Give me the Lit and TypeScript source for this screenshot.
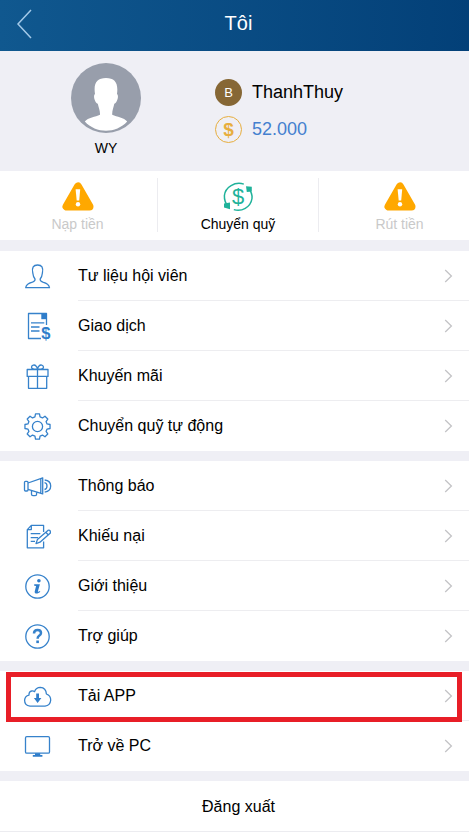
import { LitElement, html, svg, css, TemplateResult } from "lit";
import { customElement, property } from "lit/decorators.js";

const gearPath = (() => {
  const cx = 15.5, cy = 15.5, teeth = 8;
  const pts: string[] = [];
  const at = (r: number, deg: number) => {
    const a = (deg * Math.PI) / 180;
    return `${(cx + r * Math.cos(a)).toFixed(2)} ${(cy + r * Math.sin(a)).toFixed(2)}`;
  };
  for (let i = 0; i < teeth; i++) {
    const c = (i * 360) / teeth - 90;
    pts.push(at(9.9, c - 15), at(12.7, c - 9), at(12.7, c + 9), at(9.9, c + 15));
  }
  return `M${pts.join("L")}Z`;
})();

const icons: Record<string, TemplateResult> = {
  user: svg`<path d="M3.7 26.7C4 23.2 7 22 10.4 21.1C12.8 20.3 13.3 19.3 13 18C11.2 16 11 14 10.8 12C9.6 6.4 11.4 4 15.6 4C19.8 4 21.5 6.4 20.4 12C20.2 14 19.9 16 18.2 18C17.9 19.3 18.5 20.3 20.8 21.1C24.3 22 27.2 23.2 27.5 26.7Z"/>`,
  bill: svg`<path d="M24.5 14V2.5H6.5V27.5H19"/><path class="solid" d="M19.3 2.5H25V8.2H19.3Z"/><path d="M9 11.8H22.3M9 16H17.5M9 20H17.5"/><text class="glyph" x="23.8" y="27.6" font-size="16.5">$</text>`,
  gift: svg`<path d="M5.2 8.5H26V15.4H5.2ZM6.5 15.4V27.3H24.7V15.4M15.5 8.5V27.3M15.5 8.2C12 8.4 9.3 8 9.5 6C9.8 4 12.5 3.2 14 5C15 6 15.4 7 15.5 8.2C15.7 7 16.1 6 17 5C18.5 3.2 21.3 4 21.5 6C21.7 8 19 8.4 15.5 8.2"/>`,
  gear: svg`<path d=${gearPath}/><circle cx="15.5" cy="15.5" r="5.1"/>`,
  horn: svg`<rect x="2.5" y="10.3" width="3.5" height="9.7" rx="1"/><path d="M6 12L20.7 6.8V22.9L6 18.3M9.5 19.6V23.2Q9.5 24.6 11 24.6H13.2Q14.6 24.6 14.6 23.2V21M18.8 7.5V22.3M22.5 11.6Q25 12 25 15Q25 18 22.5 18.5M22.7 9Q28.7 9.7 28.7 15Q28.7 20.2 22.7 21.1"/>`,
  note: svg`<path d="M21.6 11V4.4H9.3L5.3 8.6V26.8H21.6V20.5M9.3 4.4V8.6H5.3M8.7 12.7H18.3M8.7 16.7H16M8.7 20.4H13"/><path d="M14 22.6L15.4 18.6L25.9 9.4Q28.6 8.5 28.4 11.9L18 21.2ZM23.8 11.3L26.4 14"/>`,
  info: svg`<circle cx="15.5" cy="15.5" r="11.7"/><circle class="solid" cx="16.9" cy="9.8" r="1.8"/><path class="solid" d="M12.2 13.2H17.9L15.9 20.2C15.8 21.2 17 20.6 17.8 19.9L18.3 20.7C16.4 22.7 12.3 23.8 12.7 20.5L14.1 15.1L12.2 14.7Z"/>`,
  help: svg`<circle cx="15.5" cy="15.5" r="11.7"/><path d="M12 12.4Q12 8.9 15.6 8.9Q19 8.9 19 11.9Q19 13.5 17.1 14.7Q15.6 15.7 15.6 17.7" style="stroke-width:2.5"/><rect class="solid" x="14.3" y="19.5" width="2.6" height="2.6"/>`,
  cloud: svg`<path d="M8 25.1Q2.6 24.6 2.6 19.3Q2.8 15 7 14.1Q6.8 10.5 9.8 10Q11.3 9.8 12.6 10.6Q14 6.4 18.3 6.4Q24 6.8 24.4 13Q28.8 14.6 28.7 19.2Q28.2 24.5 23 25.1Z"/><path class="solid" d="M14.2 12.5H17V17H19.4L15.6 22.1L11.9 17H14.2Z"/>`,
  screen: svg`<rect x="3.5" y="5.6" width="24" height="16.6" rx="1.3"/><path class="solid" d="M13 22.2H18.2V24H20.4V25.7H10.8V24H13Z"/>`,
};

@customElement("menu-row")
class MenuRow extends LitElement {
  @property() icon = "";
  @property() label = "";
  @property({ type: Boolean, reflect: true }) marked = false;

  static styles = css`
    :host { display: flex; height: 50px; background: #fff; position: relative; }
    .icon { width: 30px; height: 30px; margin: 10px 25px 0 22px; flex: none; fill: none; stroke: #3682cb; stroke-width: 1.3; stroke-linejoin: round; }
    .solid, .glyph { fill: #2f7dca; stroke: none; }
    .glyph { font-family: "Liberation Sans", sans-serif; font-weight: bold; text-anchor: middle; }
    .body { flex: 1; display: flex; align-items: center; justify-content: space-between; box-sizing: border-box; margin-left: 1px; padding: 1px 16px 0 0; border-bottom: 1px solid #ededf0; font-size: 16px; letter-spacing: var(--ls, 0); }
    :host(:last-of-type) .body { border-color: transparent; }
    .arrow { width: 9px; height: 14px; fill: none; stroke: #c3c3c6; stroke-width: 1.3; }
    .mark { position: absolute; left: 6px; top: 1px; width: 456px; height: 50px; box-sizing: border-box; border: 5px solid #e81e27; z-index: 1; }
  `;

  render() {
    return html`
      <svg class="icon" viewBox="0 0 30 30">${icons[this.icon]}</svg>
      <div class="body">
        <span>${this.label}</span>
        <svg class="arrow" viewBox="0 0 9 14"><path d="M1.2 1L7.4 7L1.2 13" /></svg>
      </div>
      ${this.marked ? html`<div class="mark"></div>` : ""}
    `;
  }
}

const groups = [
  [["user", "Tư liệu hội viên"], ["bill", "Giao dịch"], ["gift", "Khuyến mãi"], ["gear", "Chuyển quỹ tự động"]],
  [["horn", "Thông báo"], ["note", "Khiếu nại"], ["info", "Giới thiệu"], ["help", "Trợ giúp"]],
  [["cloud", "Tải APP"], ["screen", "Trở về PC"]],
];

const warning = html`<svg class="act-icon" viewBox="0 0 34 32">
  <path d="M17 5.5L5.5 25.5H28.5Z" fill="#ffa800" stroke="#ffa800" stroke-width="8" stroke-linejoin="round" />
  <path d="M14.6 8.3H19.2L18.2 19.5H15.7Z" fill="#fff" /><circle cx="17" cy="23.3" r="2.2" fill="#fff" />
</svg>`;

const transfer = html`<svg class="act-icon" viewBox="0 0 34 32">
  <g fill="none" stroke="#1fb29a" stroke-width="1.5">
    <path d="M22.8 3.1C14 .2 4.2 6 3.4 14.5Q3.1 20.5 7 25.5" /><path d="M27 6.5Q31.6 12 31 17.5C29.6 26.5 20.5 31 12.8 28.6" />
  </g>
  <path d="M3 22.5L9 21.5L9 28.2L3 26.5ZM25 5.2L30.8 5.8V10.5L25.8 11Z" fill="#1fb29a" />
  <text x="17" y="23.2" text-anchor="middle" font-size="22" fill="#1fb29a" font-family="Liberation Sans">$</text>
</svg>`;

@customElement("app-root")
class AppRoot extends LitElement {
  static styles = css`
    :host { display: block; width: 469px; height: 832px; overflow: hidden; background: #efeff5; color: #000; font-family: "Liberation Sans", Arial, sans-serif; }
    .bar { height: 51px; display: grid; grid-template-columns: 48px 1fr 40px; background: linear-gradient(90deg, #10588f, #034078); color: #fff; }
    .back { width: 16px; height: 30px; margin: 9px 0 0 16px; fill: none; stroke: #a3c9e8; stroke-width: 1.5; }
    .title { font-size: 20px; line-height: 46px; text-align: center; }
    .profile { height: 120px; display: flex; }
    .who { width: 212px; display: flex; flex-direction: column; align-items: center; padding-top: 12px; box-sizing: border-box; }
    .avatar { width: 70px; height: 70px; }
    .nick { font-size: 14px; line-height: 16px; margin-top: 7px; }
    .facts { padding: 28px 0 0 3px; display: flex; flex-direction: column; gap: 10px; }
    .fact { display: flex; align-items: center; height: 27px; gap: 10px; font-size: 18px; }
    .badge { width: 27px; height: 27px; box-sizing: border-box; border-radius: 50%; display: flex; align-items: center; justify-content: center; background: #866735; color: #fff; font-size: 13px; }
    .coin { background: none; border: 1.5px solid #e7ae3e; color: #e7ae3e; font-size: 19px; font-weight: bold; }
    .money { color: #4480cf; }
    .actions { height: 69px; margin-bottom: 11px; display: grid; grid-template-columns: 157px 160px 1fr; gap: 1px; background: #fff; }
    .action { display: flex; flex-direction: column; align-items: center; padding-top: 10px; font-size: 14px; line-height: 16px; position: relative; }
    .action + .action::before { content: ""; position: absolute; left: -1px; top: 7px; width: 1px; height: 54px; background: #ececf0; }
    .off { color: #c9c9c9; }
    .left { padding-right: 2px; }
    .right { margin-left: 0; padding-left: 11px; }
    .act-icon { width: 34px; height: 32px; margin-bottom: 3px; }
    .group { margin-bottom: 10px; }
    .exit { height: 50px; background: #fff; border-bottom: 1px solid #ececf0; text-align: center; line-height: 51px; font-size: 16px; padding-left: 8px; }
  `;

  render() {
    return html`
      <header class="bar">
        <svg class="back" viewBox="0 0 16 30"><path d="M15 1L2 15L15 29" /></svg>
        <div class="title">Tôi</div>
      </header>
      <section class="profile">
        <div class="who">
          <svg class="avatar" viewBox="0 0 70 70">
            <circle cx="35" cy="35" r="35" fill="#989eab" />
            <path fill="#fff" d="M13.8 58.5C17 54.7 24.5 54 29 51.8C29.2 47 27.5 44.5 26.8 40.7C24.5 40.7 21.5 33 24 31C22.3 20 26 15 35 15C44 15 47.5 20 46 31C48.5 33 45.5 40.7 43.3 40.7C42.6 44.5 41 47 41.2 51.8C46 54 53 54.7 56.2 58.5C45 70.8 25 70.8 13.8 58.5Z" />
          </svg>
          <div class="nick">WY</div>
        </div>
        <div class="facts">
          <div class="fact"><span class="badge">B</span><span>ThanhThuy</span></div>
          <div class="fact"><span class="badge coin">$</span><span class="money">52.000</span></div>
        </div>
      </section>
      <section class="actions">
        <div class="action off left">${warning}<span>Nạp tiền</span></div>
        <div class="action">${transfer}<span>Chuyển quỹ</span></div>
        <div class="action off right">${warning}<span>Rút tiền</span></div>
      </section>
      ${groups.map((rows) => html`<section class="group">
        ${rows.map(([icon, label]) => html`<menu-row .icon=${icon} .label=${label} ?marked=${icon === "cloud"}></menu-row>`)}
      </section>`)}
      <div class="exit">Đăng xuất</div>
    `;
  }
}
